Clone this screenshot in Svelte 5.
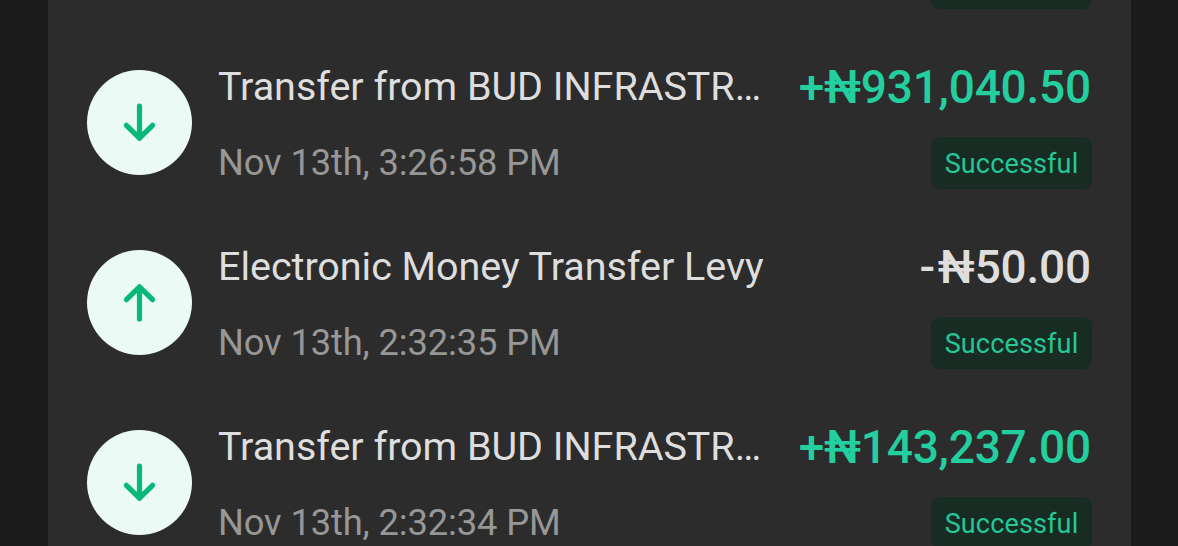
<script lang="ts">
  type Transaction = {
    id: number;
    title: string;
    date: string;
    amount: string;
    incoming: boolean;
    status: string;
  };

  const transactions: Transaction[] = [
    { id: 1, title: 'Transfer from BUD INFRASTR…', date: 'Nov 13th, 3:26:58 PM', amount: '₦931,040.50', incoming: true, status: 'Successful' },
    { id: 2, title: 'Electronic Money Transfer Levy', date: 'Nov 13th, 2:32:35 PM', amount: '₦50.00', incoming: false, status: 'Successful' },
    { id: 3, title: 'Transfer from BUD INFRASTR…', date: 'Nov 13th, 2:32:34 PM', amount: '₦143,237.00', incoming: true, status: 'Successful' }
  ];
</script>

<main class="screen">
  <section class="list">
    <!-- bottom edge of the row scrolled out above -->
    <div class="previous"></div>
    {#each transactions as t (t.id)}
      <article class="row">
        <div class="icon">
          <svg viewBox="0 0 39 39" class:up={!t.incoming} aria-hidden="true">
            <path d="M19.5 3V35.2M6.4 22.3L19.5 35.2L32.6 22.3" />
          </svg>
        </div>
        <div class="info">
          <div class="title">{t.title}</div>
          <div class="date">{t.date}</div>
        </div>
        <div class="side">
          <div class="amount" class:credit={t.incoming}>{#if t.incoming}+{:else}<span class="minus">-</span>{/if}{t.amount}</div>
          <span class="badge">{t.status}</span>
        </div>
      </article>
    {/each}
  </section>
</main>

<style>
  :global(body) {
    background: #1b1b1b;
  }
  .screen {
    height: 546px;
    overflow: hidden;
    font-family: Roboto, sans-serif;
  }
  .list {
    display: flow-root;
    width: 1083px;
    height: 546px;
    margin-left: 48px;
    background: #2c2c2c;
  }
  .previous {
    width: 161px;
    height: 9px;
    margin: 0 39px 41px auto;
    border-radius: 0 0 9px 9px;
    background: #182c24;
  }
  .row {
    display: flex;
    height: 180px;
    padding: 0 39px;
    box-sizing: border-box;
  }
  .icon {
    display: grid;
    place-items: center;
    width: 105px;
    height: 105px;
    margin-top: 19.5px;
    border-radius: 50%;
    background: #ebfaf5;
  }
  svg {
    width: 39px;
    height: 39px;
    fill: none;
    stroke: #08b878;
    stroke-width: 5.2;
    stroke-linecap: round;
    stroke-linejoin: round;
  }
  .up {
    transform: rotate(180deg);
  }
  .info {
    flex: 1;
    padding: 12px 0 0 26px;
    white-space: nowrap;
  }
  .title {
    height: 50px;
    color: #dedede;
    font-size: 39.5px;
    line-height: 50px;
    letter-spacing: -0.04px;
  }
  .date {
    height: 50px;
    margin-top: 26px;
    color: #979797;
    font-size: 36.3px;
    line-height: 50px;
    letter-spacing: -0.12px;
  }
  .side {
    display: flex;
    flex-direction: column;
    align-items: flex-end;
    padding-top: 12px;
  }
  .amount {
    height: 50px;
    padding-right: 1px;
    color: #dedede;
    font-size: 46px;
    font-weight: 500;
    line-height: 50px;
    letter-spacing: -0.2px;
    white-space: nowrap;
  }
  .amount.credit {
    color: #24cf9f;
  }
  .minus {
    margin-right: 3px;
  }
  .badge {
    width: 161px;
    height: 52px;
    margin-top: 25px;
    border-radius: 9px;
    background: #182c24;
    color: #24c795;
    font-size: 27px;
    line-height: 54px;
    letter-spacing: 0.15px;
    text-align: center;
  }
</style>
